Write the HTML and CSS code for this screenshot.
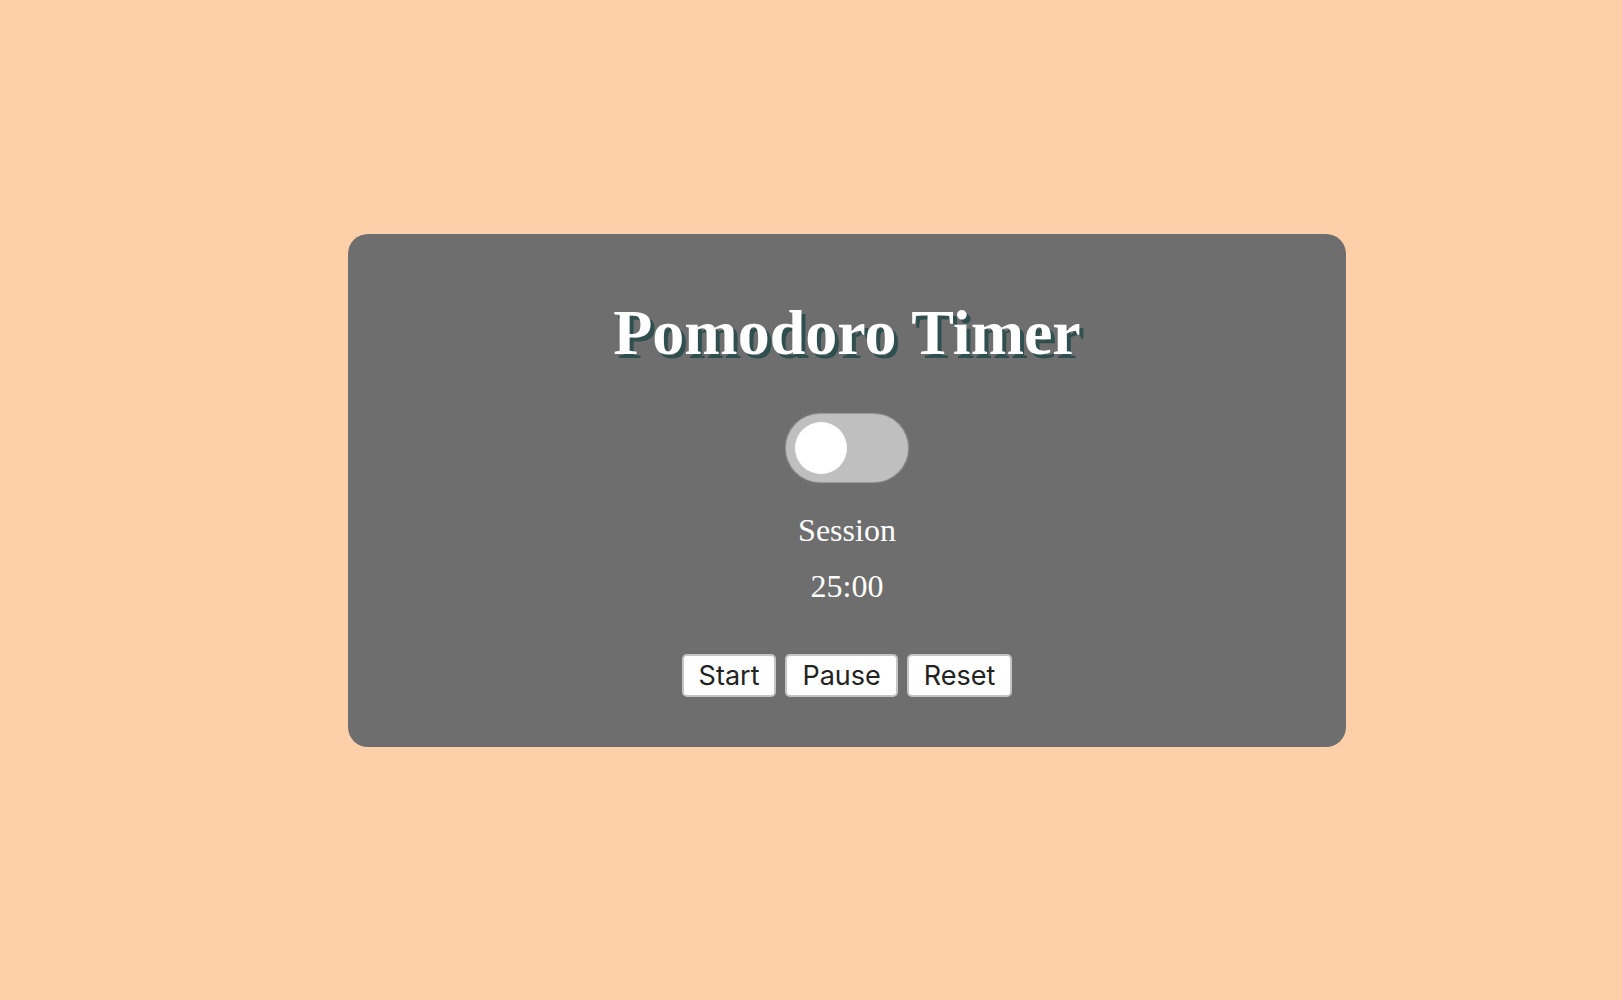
FILE: index.html
```html
<!DOCTYPE html>
<html lang="en">
<head>
<meta charset="utf-8">
<title>Pomodoro Timer</title>
<link rel="stylesheet" href="styles.css">
</head>
<body>
<div class="page">
  <div class="card">
    <h1 class="title">Pomodoro Timer</h1>
    <div class="toggle"><div class="knob"></div></div>
    <div class="label">Session</div>
    <div class="time">25:00</div>
    <div class="controls">
      <button class="btn">Start</button>
      <button class="btn">Pause</button>
      <button class="btn">Reset</button>
    </div>
  </div>
</div>
</body>
</html>
```

FILE: styles.css
```css
html, body {
  margin: 0;
  padding: 0;
  background: #fdd0aa;
}
body {
  font-family: "Liberation Serif", "Times New Roman", serif;
  min-height: 1000px;
}
.page {
  display: flex;
  justify-content: center;
  padding: 234px 0 0 72px;
}
.card {
  width: 998px;
  box-sizing: border-box;
  background: #6e6e6e;
  border-radius: 20px;
  padding: 62px 0 50px;
  display: flex;
  flex-direction: column;
  align-items: center;
  color: #fff;
}
.title {
  margin: 0;
  font-size: 64px;
  line-height: 74px;
  font-weight: bold;
  color: #fff;
  text-shadow: 4px 4px 0 #2f4f4f;
}
.toggle {
  margin-top: 44px;
  width: 122px;
  height: 68px;
  border-radius: 34px;
  background: #bfbfbf;
  box-shadow: 0 0 1px 1px rgba(200,200,200,0.5);
  display: flex;
  align-items: center;
  padding-left: 9px;
  box-sizing: border-box;
}
.knob {
  width: 52px;
  height: 52px;
  border-radius: 50%;
  background: #fff;
}
.label, .time {
  font-size: 32px;
  line-height: 37px;
}
.label {
  margin-top: 30px;
}
.time {
  margin-top: 19px;
}
.controls {
  margin-top: 49px;
  display: flex;
  gap: 9px;
}
.btn {
  font-family: Inter, "Liberation Sans", sans-serif;
  font-size: 27px;
  line-height: 37px;
  height: 43px;
  padding: 0 15px;
  background: #fff;
  color: #222;
  border: 2px solid #c4c4c4;
  border-radius: 5px;
  box-sizing: border-box;
}
```
